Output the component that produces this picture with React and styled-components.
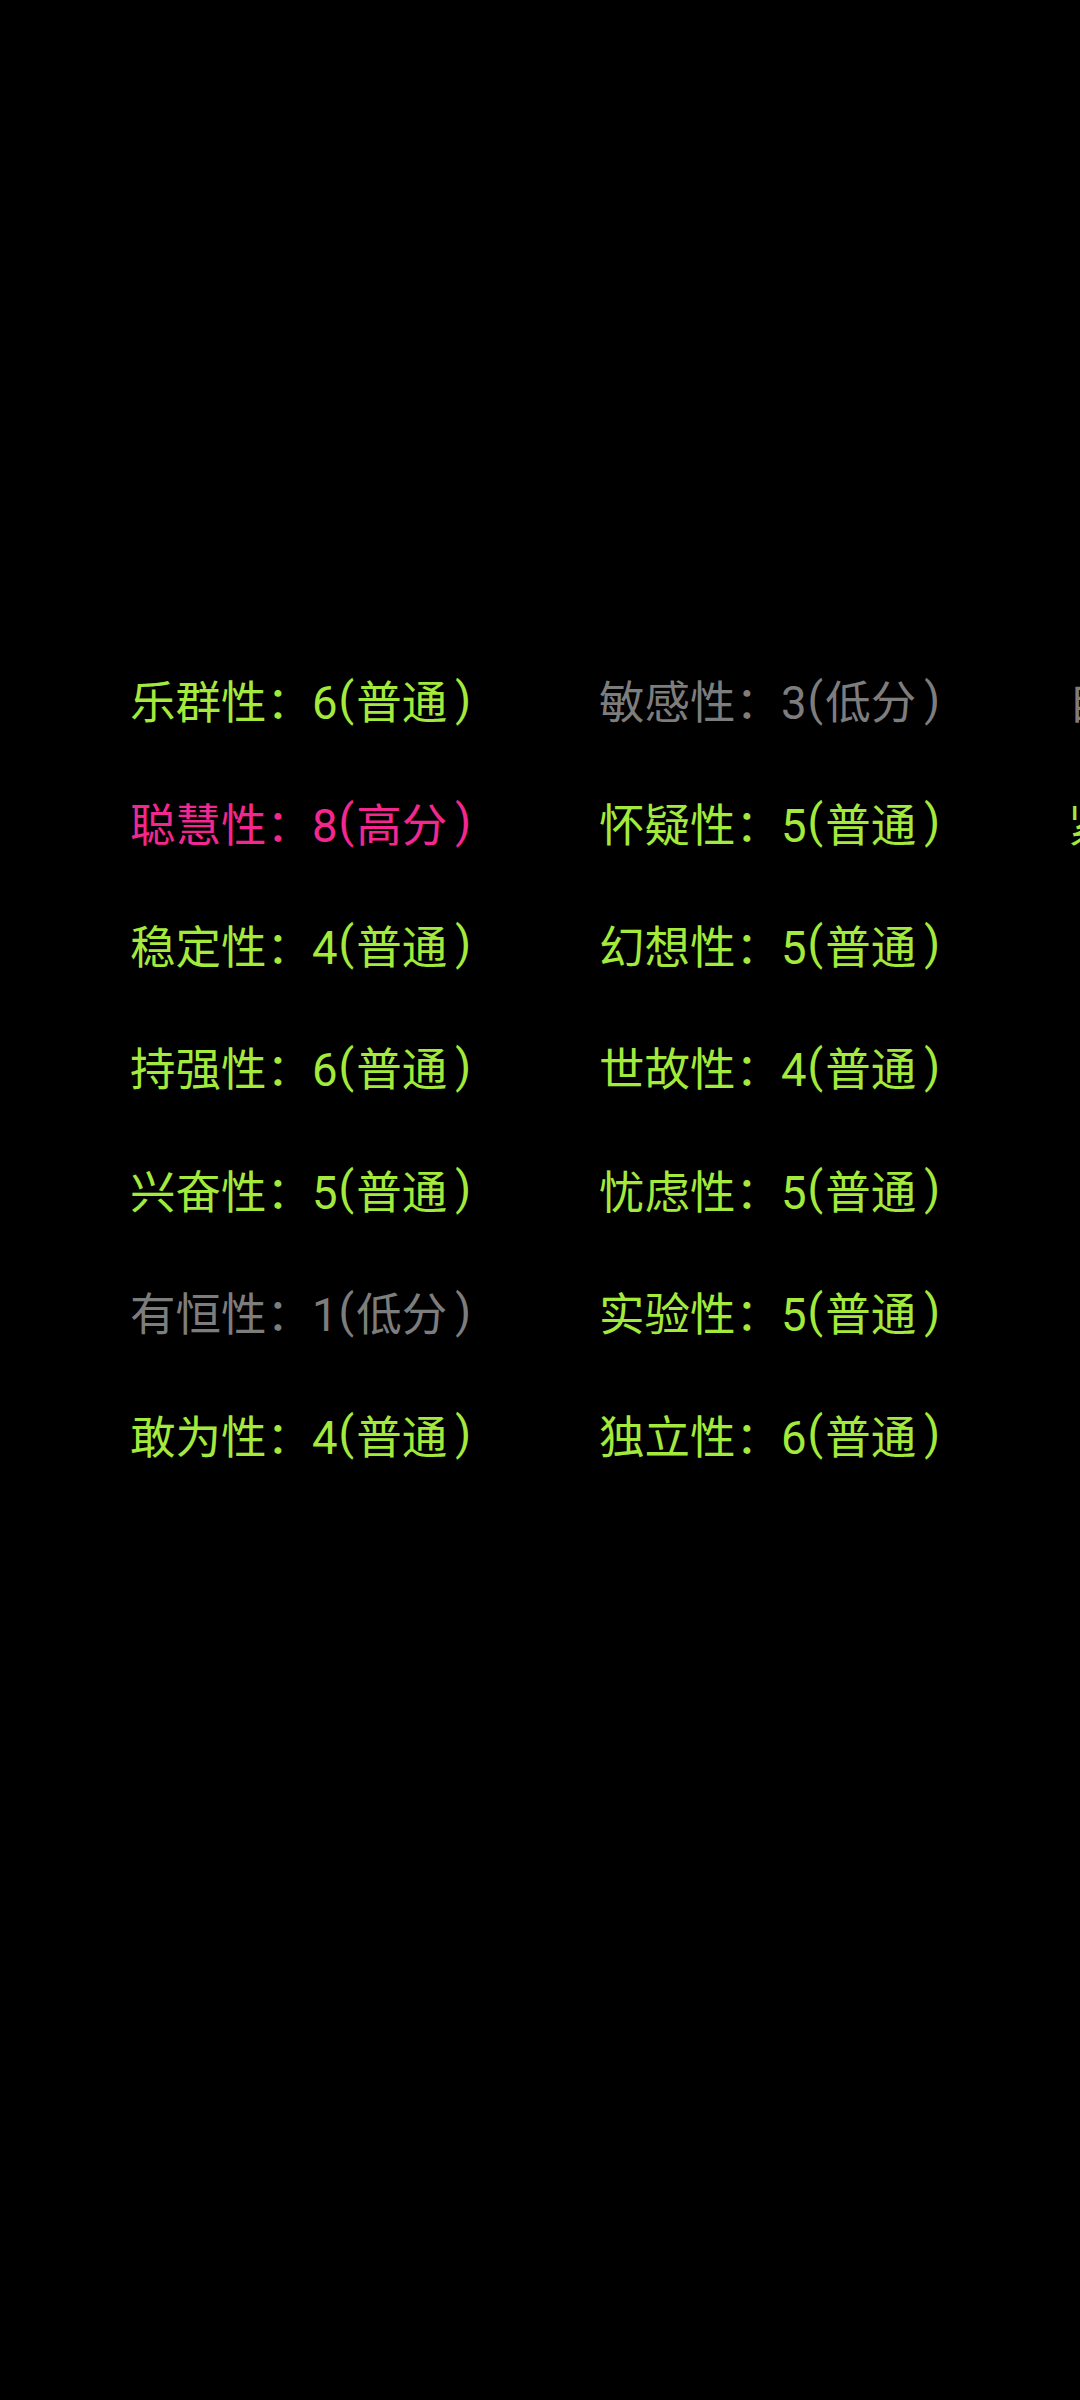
import React from 'react';
import styled, {createGlobalStyle} from 'styled-components';

const GlobalStyle = createGlobalStyle`
  html, body {
    margin: 0;
    padding: 0;
    background: #000;
  }
`;

const tone = {
    normal: '#a3ea3c',
    high: '#f2278f',
    low: '#7d7d7d',
};

const label = {normal: '普通', high: '高分', low: '低分'};

const columns = [
    [
        {name: '乐群性', score: 6},
        {name: '聪慧性', score: 8},
        {name: '稳定性', score: 4},
        {name: '持强性', score: 6},
        {name: '兴奋性', score: 5},
        {name: '有恒性', score: 1},
        {name: '敢为性', score: 4},
    ],
    [
        {name: '敏感性', score: 3},
        {name: '怀疑性', score: 5},
        {name: '幻想性', score: 5},
        {name: '世故性', score: 4},
        {name: '忧虑性', score: 5},
        {name: '实验性', score: 5},
        {name: '独立性', score: 6},
    ],
    [
        {name: '自律性', score: 3},
        {name: '紧张性', score: 5},
    ],
];

const level = (score) => (score >= 8 ? 'high' : score <= 3 ? 'low' : 'normal');

const Screen = styled.div`
  width: 1080px;
  height: 2400px;
  background: #000;
  overflow: hidden;
  box-sizing: border-box;
  padding: 638px 0 0 130px;
`;

// wider than the screen, third column is cut at the right edge
const Board = styled.div`
  display: flex;
  width: max-content;
`;

const Column = styled.div`
  display: flex;
  flex-direction: column;
  width: 469px;
  flex-shrink: 0;
`;

const Factor = styled.div`
  height: 122.4px;
  display: flex;
  align-items: center;
  font-family: Roboto, "Noto Sans CJK SC", sans-serif;
  font-size: 45.5px;
  white-space: nowrap;
  color: ${({$level}) => tone[$level]};
`;

const Paren = styled.span`
  margin: ${({$close}) => ($close ? '0 0 0 8px' : '0 2px 0 1px')};
`;

export default function App() {
    return (
        <>
            <GlobalStyle/>
            <Screen>
                <Board>
                    {columns.map((col, i) => (
                        <Column key={i}>
                            {col.map((f) => {
                                const lv = level(f.score);
                                return (
                                    <Factor key={f.name} $level={lv}>
                                        {f.name}：{f.score}<Paren>(</Paren>{label[lv]}<Paren $close>)</Paren>
                                    </Factor>
                                );
                            })}
                        </Column>
                    ))}
                </Board>
            </Screen>
        </>
    );
}
